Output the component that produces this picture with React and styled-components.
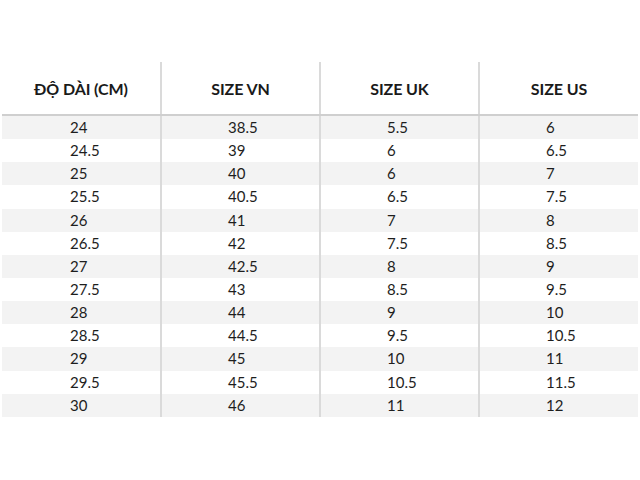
import React from 'react';
import styled, { createGlobalStyle } from 'styled-components';

const GlobalStyle = createGlobalStyle`
  html, body {
    margin: 0;
    padding: 0;
    background: #fff;
  }
  body {
    font-family: Lato, "Liberation Sans", sans-serif;
    color: #1c1c1c;
  }
`;

const Page = styled.div`
  width: 640px;
  height: 480px;
  padding: 62px 2px 0 2px;
  box-sizing: border-box;
`;

const Table = styled.table`
  width: 636px;
  border-collapse: collapse;
  table-layout: fixed;
`;

const HeadCell = styled.th`
  height: 52px;
  padding: 0;
  font-size: 16px;
  font-weight: 700;
  letter-spacing: -0.1px;
  text-align: center;
  color: #1a1a1a;
  border-bottom: 2px solid #cfcfcf;
  border-left: ${p => (p.$first ? 'none' : '2px solid #dadada')};
`;

const Row = styled.tr`
  background: ${p => (p.$striped ? '#f3f3f3' : '#fff')};
`;

const Cell = styled.td`
  height: 23.15px;
  padding: 0 0 0 ${p => (p.$first ? '68px' : '66px')};
  font-size: 15px;
  line-height: 23px;
  text-align: left;
  color: #1e1e1e;
  border-left: ${p => (p.$first ? 'none' : '2px solid #dadada')};
`;

const headers = ['ĐỘ DÀI (CM)', 'SIZE VN', 'SIZE UK', 'SIZE US'];

const rows = [
  ['24', '38.5', '5.5', '6'],
  ['24.5', '39', '6', '6.5'],
  ['25', '40', '6', '7'],
  ['25.5', '40.5', '6.5', '7.5'],
  ['26', '41', '7', '8'],
  ['26.5', '42', '7.5', '8.5'],
  ['27', '42.5', '8', '9'],
  ['27.5', '43', '8.5', '9.5'],
  ['28', '44', '9', '10'],
  ['28.5', '44.5', '9.5', '10.5'],
  ['29', '45', '10', '11'],
  ['29.5', '45.5', '10.5', '11.5'],
  ['30', '46', '11', '12'],
];

const App = () => {
  return (
    <Page>
      <GlobalStyle />
      <Table>
        <thead>
          <tr>
            {headers.map((h, i) => (
              <HeadCell key={h} $first={i === 0}>{h}</HeadCell>
            ))}
          </tr>
        </thead>
        <tbody>
          {rows.map((r, ri) => (
            <Row key={r[0]} $striped={ri % 2 === 0}>
              {r.map((v, ci) => (
                <Cell key={ci} $first={ci === 0}>{v}</Cell>
              ))}
            </Row>
          ))}
        </tbody>
      </Table>
    </Page>
  );
};

export default App;
